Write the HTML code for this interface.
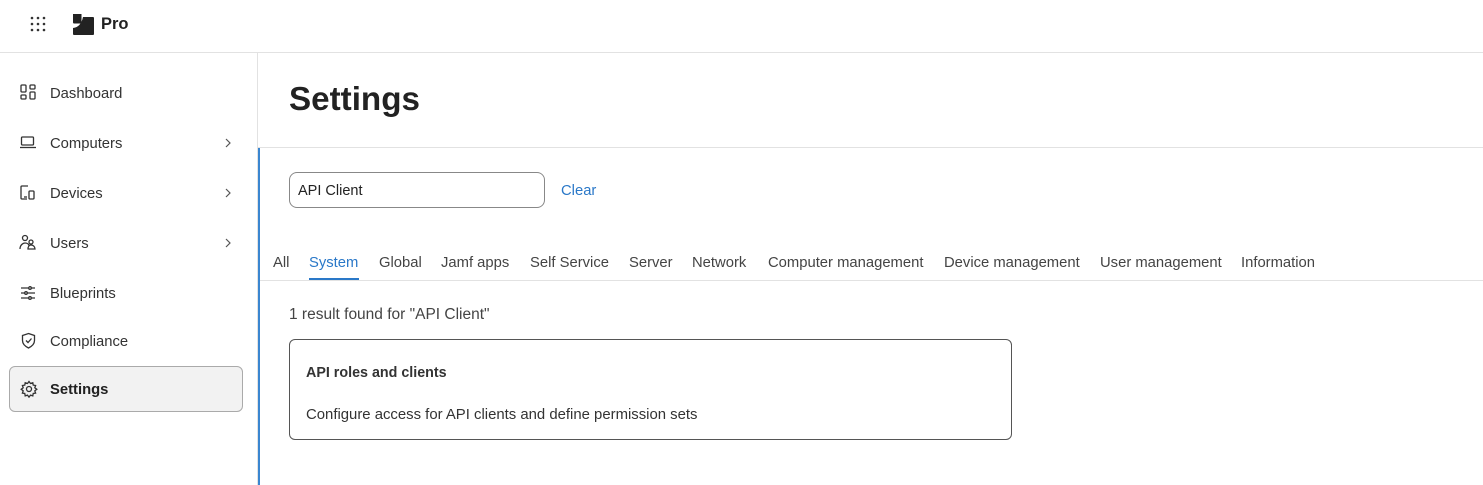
<!DOCTYPE html>
<html><head><style>
*{margin:0;padding:0;box-sizing:border-box}
body{width:1483px;height:485px;overflow:hidden;background:#fff;font-family:"Liberation Sans",sans-serif;color:#222;position:relative}
.a{position:absolute}
.nav{font-size:14.8px;color:#333}
.tab{position:absolute;top:255px;font-size:14.8px;color:#444}
</style></head><body>
<div class="a" style="left:0;top:52px;width:1483px;height:1px;background:#e2e2e2"></div>
<svg class="a" style="left:30px;top:16px" width="18" height="16"><g fill="#333"><circle cx="2" cy="2" r="1.3"/><circle cx="8" cy="2" r="1.3"/><circle cx="14" cy="2" r="1.3"/><circle cx="2" cy="8" r="1.3"/><circle cx="8" cy="8" r="1.3"/><circle cx="14" cy="8" r="1.3"/><circle cx="2" cy="14" r="1.3"/><circle cx="8" cy="14" r="1.3"/><circle cx="14" cy="14" r="1.3"/></g></svg>
<svg class="a" style="left:73px;top:14px" width="22" height="22"><path d="M0 0h8.5v9.5H1a1 1 0 0 1-1-1z M10 3 L20 3 Q21 3 21 4 L21 20 Q21 21 20 21 L1 21 Q0 21 0 20 L0 14 Q8 13 10 3 Z" fill="#222"/></svg>
<div class="a" style="left:101px;top:15px;font-weight:bold;font-size:16.5px;color:#222">Pro</div>
<div class="a" style="left:257px;top:53px;width:1px;height:432px;background:#e2e2e2"></div>
<div class="a" style="left:258px;top:148px;width:2px;height:337px;background:#3a86d0"></div>
<svg class="a" style="left:20px;top:84px" width="18" height="18" fill="none" stroke="#333" stroke-width="1.3"><rect x="1" y="1" width="5" height="7" rx="1"/><rect x="10" y="1" width="5" height="4" rx="1"/><rect x="1" y="11" width="5" height="4" rx="1"/><rect x="10" y="8" width="5" height="7" rx="1"/></svg>
<div class="a nav" style="left:50px;top:86px">Dashboard</div>
<svg class="a" style="left:19px;top:135px" width="18" height="16" fill="none" stroke="#333" stroke-width="1.3"><rect x="2.5" y="2" width="12" height="8" rx="1"/><path d="M1 12.5h16"/></svg>
<div class="a nav" style="left:50px;top:136px">Computers</div>
<svg class="a" style="left:19px;top:184px" width="18" height="18" fill="none" stroke="#333" stroke-width="1.3"><path d="M9 2H3a1 1 0 0 0-1 1v11a1 1 0 0 0 1 1h5"/><rect x="10" y="7" width="5" height="8" rx="1"/><path d="M5 13h3"/></svg>
<div class="a nav" style="left:50px;top:186px">Devices</div>
<svg class="a" style="left:19px;top:234px" width="18" height="18" fill="none" stroke="#333" stroke-width="1.3"><circle cx="6" cy="4" r="2.5"/><circle cx="12" cy="8" r="2"/><path d="M1 15c0-4 3-6 5-6s4 1 4 3M9 15c0-2 1-4 3-4s4 1.5 4 4z"/></svg>
<div class="a nav" style="left:50px;top:236px">Users</div>
<svg class="a" style="left:19px;top:285px" width="18" height="16" fill="none" stroke="#333" stroke-width="1.3"><path d="M2 3h14M2 8h14M2 13h14"/><circle cx="11" cy="3" r="1.3" fill="#fff"/><circle cx="7" cy="8" r="1.3" fill="#fff"/><circle cx="11" cy="13" r="1.3" fill="#fff"/></svg>
<div class="a nav" style="left:50px;top:286px">Blueprints</div>
<svg class="a" style="left:20px;top:332px" width="18" height="18" fill="none" stroke="#333" stroke-width="1.3"><path d="M8.5 1.5l6 2v5c0 4-3 6-6 7.5-3-1.5-6-3.5-6-7.5v-5z"/><path d="M6 8.5l2 2 3.5-4"/></svg>
<div class="a nav" style="left:50px;top:334px">Compliance</div>
<div class="a" style="left:9px;top:366px;width:234px;height:46px;background:#f2f2f2;border:1px solid #aaa;border-radius:6px"></div>
<svg class="a" style="left:20px;top:380px" width="18" height="18" fill="none" stroke="#333" stroke-width="1.3"><circle cx="9" cy="9" r="2.5"/><path d="M9 1.5l1.5 2 2.3-.8.4 2.4 2.4.4-.8 2.3 2 1.5-2 1.5.8 2.3-2.4.4-.4 2.4-2.3-.8-1.5 2-1.5-2-2.3.8-.4-2.4-2.4-.4.8-2.3-2-1.5 2-1.5-.8-2.3 2.4-.4.4-2.4 2.3.8z"/></svg>
<div class="a nav" style="left:50px;top:382px;font-weight:bold;color:#222">Settings</div>
<svg class="a" style="left:223px;top:137px" width="10" height="12" fill="none" stroke="#555" stroke-width="1.2"><path d="M3 2l4 4-4 4"/></svg>
<svg class="a" style="left:223px;top:187px" width="10" height="12" fill="none" stroke="#555" stroke-width="1.2"><path d="M3 2l4 4-4 4"/></svg>
<svg class="a" style="left:223px;top:237px" width="10" height="12" fill="none" stroke="#555" stroke-width="1.2"><path d="M3 2l4 4-4 4"/></svg>
<div class="a" style="left:289px;top:81px;font-size:33.2px;font-weight:bold;color:#222">Settings</div>
<div class="a" style="left:258px;top:147px;width:1225px;height:1px;background:#e2e2e2"></div>
<div class="a" style="left:289px;top:172px;width:256px;height:36px;border:1px solid #888;border-radius:8px;font-size:14.5px;padding:10px 8px;color:#222">API Client</div>
<div class="a" style="left:561px;top:183px;font-size:14.8px;color:#2a78c8">Clear</div>
<div class="tab" style="left:273px">All</div>
<div class="tab" style="left:309px;color:#2a78c8">System</div>
<div class="a" style="left:309px;top:278px;width:50px;height:2px;background:#2a78c8"></div>
<div class="tab" style="left:379px">Global</div>
<div class="tab" style="left:441px">Jamf apps</div>
<div class="tab" style="left:530px">Self Service</div>
<div class="tab" style="left:629px">Server</div>
<div class="tab" style="left:692px">Network</div>
<div class="tab" style="left:768px">Computer management</div>
<div class="tab" style="left:944px">Device management</div>
<div class="tab" style="left:1100px">User management</div>
<div class="tab" style="left:1241px">Information</div>
<div class="a" style="left:260px;top:280px;width:1223px;height:1px;background:#e2e2e2"></div>
<div class="a" style="left:289px;top:306px;font-size:15.5px;color:#444">1 result found for "API Client"</div>
<div class="a" style="left:289px;top:339px;width:723px;height:101px;border:1px solid #555;border-radius:6px"></div>
<div class="a" style="left:306px;top:365px;font-size:14.3px;font-weight:bold;color:#333">API roles and clients</div>
<div class="a" style="left:306px;top:407px;font-size:14.9px;color:#333">Configure access for API clients and define permission sets</div>
</body></html>
